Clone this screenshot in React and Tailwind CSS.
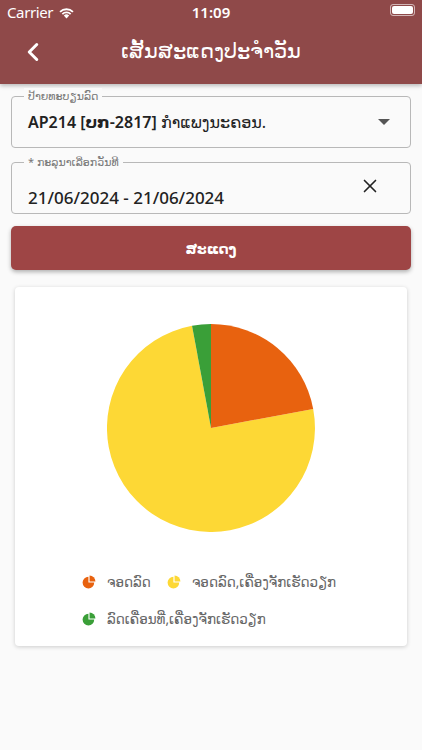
import { ChevronLeft, X } from "lucide-react";

const font = { fontFamily: '"Noto Sans", "DejaVu Sans", sans-serif' };

function StatusBar() {
    return (
        <div className="h-[28px] flex items-start justify-between px-[7px] pt-[1px] text-white text-[15px]">
            <div className="flex items-center gap-[5px] w-[120px]">
                <span className="tracking-tight">Carrier</span>
                <svg width="17" height="13" viewBox="0 0 17 13">
                    <path d="M8.5 12.5 L5.8 9.6 A3.9 3.9 0 0 1 11.2 9.6 Z" fill="white" />
                    <path d="M3.7 7.5 A6.9 6.9 0 0 1 13.3 7.5 L12 8.8 A5 5 0 0 0 5 8.8 Z" fill="white" />
                    <path d="M1.4 5.2 A10.2 10.2 0 0 1 15.6 5.2 L14.3 6.5 A8.3 8.3 0 0 0 2.7 6.5 Z" fill="white" />
                </svg>
            </div>
            <span className="font-semibold">11:09</span>
            <div className="w-[120px] flex justify-end pt-[3px]">
                <div className="w-[25px] h-[12px] rounded-[3px] border border-white/60 p-[1px] flex">
                    <div className="flex-1 bg-white rounded-[2px]" />
                </div>
            </div>
        </div>
    );
}

function Field({ label, children, right }) {
    return (
        <div className="relative mx-[11px] h-[52px] rounded-[4px] border border-[#b8b8b8] flex items-center pl-[16px] pr-[18px]">
            <span className="absolute -top-[9px] left-[12px] px-[4px] bg-[#fafafa] text-[11px] text-[#777]">{label}</span>
            <div className="flex-1">{children}</div>
            {right}
        </div>
    );
}

function PieIcon({ color }) {
    // three-quarter disc with the top-right quarter pulled out
    return (
        <svg width="14" height="14" viewBox="0 0 24 24">
            <path d="M11 13 L11 3 A10 10 0 1 0 21 13 Z" fill={color} />
            <path d="M13 11 L13 1 A10 10 0 0 1 23 11 Z" fill={color} />
        </svg>
    );
}

function Legend({ color, label }) {
    return (
        <div className="flex items-center gap-[11px]">
            <PieIcon color={color} />
            <span className="text-[13.5px] text-[#666]">{label}</span>
        </div>
    );
}

export default function App() {
    const orange = "M104 104 L104 0 A104 104 0 0 1 206.2 84.9 Z";
    const yellow = "M104 104 L206.2 84.9 A104 104 0 1 1 85.05 1.74 Z";
    const green = "M104 104 L85.05 1.74 A104 104 0 0 1 104 0 Z";

    return (
        <div style={font} className="w-[422px] h-[750px] bg-[#fafafa] overflow-hidden">
            <div className="bg-[#8f4949] h-[84px] shadow-[0_2px_4px_rgba(0,0,0,0.25)]">
                <StatusBar />
                <div className="relative h-[50px] flex items-center justify-center">
                    <ChevronLeft className="absolute left-[18px] top-[9px] text-white" size={30} strokeWidth={2.4} />
                    <h1 className="text-white text-[21px] font-light -mt-[4px]">ເສັ້ນສະແດງປະຈຳວັນ</h1>
                </div>
            </div>

            <div className="pt-[12px] flex flex-col gap-[14px]">
                <Field
                    label="ປ້າຍທະບຽນລົດ"
                    right={
                        <svg width="12" height="7" viewBox="0 0 12 7" className="mr-[2px]">
                            <path d="M0 0 L12 0 L6 6 Z" fill="#555" />
                        </svg>
                    }
                >
                    <span className="text-[16px] text-[#222]">
                        <span className="font-semibold">AP214 [ບກ-2817]</span> ກຳແພງນະຄອນ.
                    </span>
                </Field>
                <Field label="* ກະລຸນາເລືອກວັນທີ" right={<X size={22} strokeWidth={1.8} className="text-[#222] mr-[11px] -mt-[4px]" />}>
                    <span className="block text-[17px] font-medium text-[#222] pt-[20px]">21/06/2024 - 21/06/2024</span>
                </Field>
            </div>

            <button className="mt-[12px] mx-[11px] w-[400px] h-[44px] rounded-[5px] bg-[#9e4545] text-white text-[14px] font-semibold shadow-[0_2px_4px_rgba(0,0,0,0.3)]">
                ສະແດງ
            </button>

            <div className="mt-[17px] mx-[15px] h-[359px] bg-white rounded-[4px] shadow-[0_1px_4px_rgba(0,0,0,0.18)] flex flex-col items-center">
                <svg width="208" height="208" viewBox="0 0 208 208" className="mt-[37px]">
                    <path d={yellow} fill="#fdd835" />
                    <path d={orange} fill="#e8620f" />
                    <path d={green} fill="#3a9f38" />
                </svg>
                <div className="self-start ml-[67px] mt-[40px] flex flex-col gap-[17px]">
                    <div className="flex gap-[16px]">
                        <Legend color="#e8620f" label="ຈອດລົດ" />
                        <Legend color="#fdd835" label="ຈອດລົດ,ເຄື່ອງຈັກເຮັດວຽກ" />
                    </div>
                    <Legend color="#3a9f38" label="ລົດເຄື່ອນທີ່,ເຄື່ອງຈັກເຮັດວຽກ" />
                </div>
            </div>
        </div>
    );
}
